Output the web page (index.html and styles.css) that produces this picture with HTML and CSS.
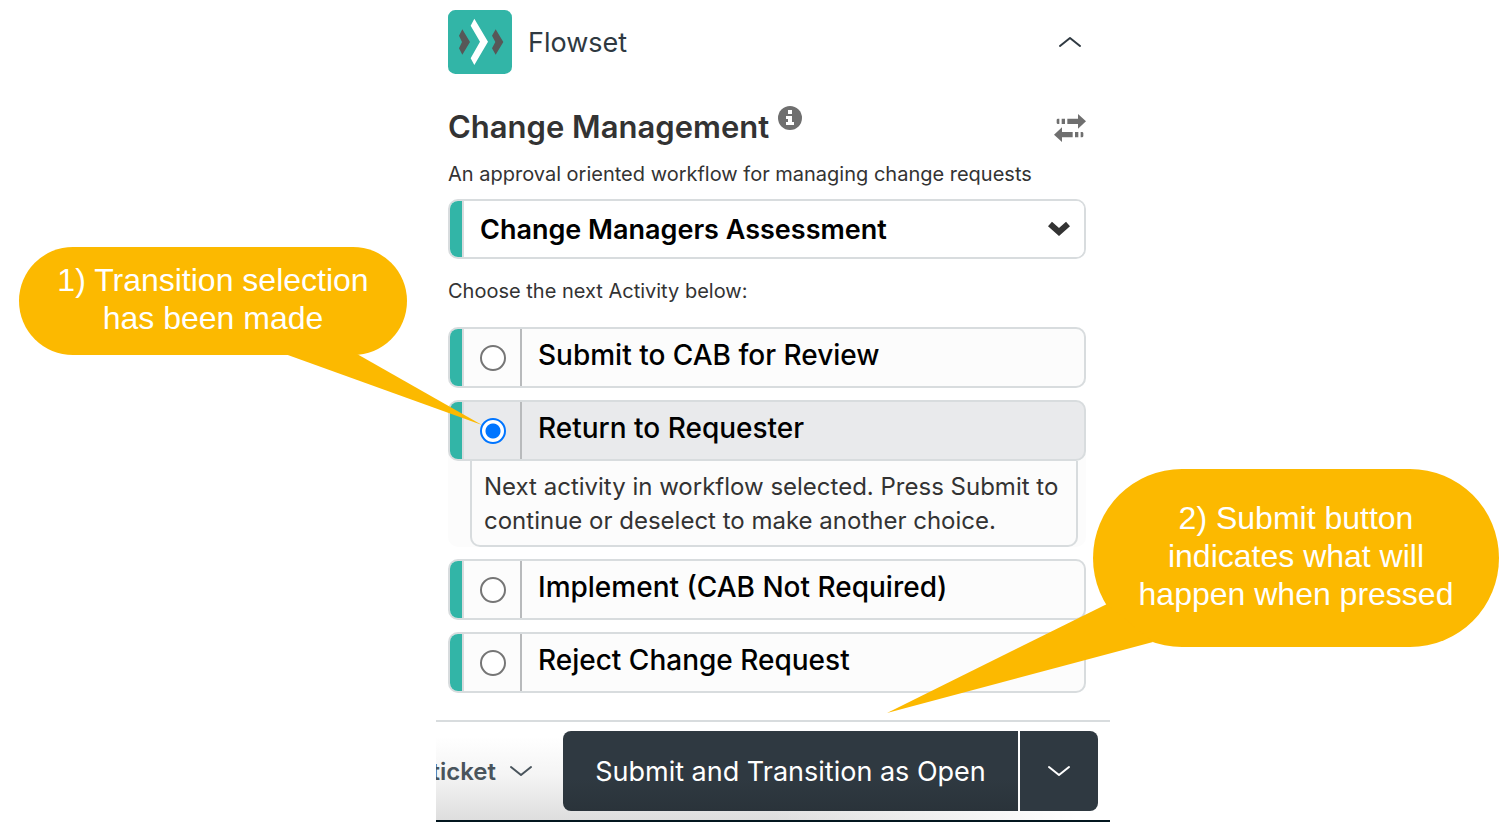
FILE: index.html
```html
<!DOCTYPE html>
<html lang="en">
<head>
  <meta charset="UTF-8">
  <meta name="viewport" content="width=device-width, initial-scale=1.0">
  <title>Flowset</title>
  <link rel="stylesheet" href="styles.css">
</head>
<body>
  <div class="page">
    <main class="panel">
      <header class="app-header">
        <svg class="logo" viewBox="0 0 192 192" aria-hidden="true">
          <rect width="192" height="192" rx="22" fill="#32b5a7"/>
          <path d="M43 58 66 96 43 134 33 115 42 96 33 77z" fill="#575757"/>
          <path d="M79 26 120 95 79 165 68 145 96 95 68 47z" fill="#fff"/>
          <path d="M143 58 166 96 143 134 132 115 142 96 132 77z" fill="#575757"/>
        </svg>
        <span class="app-name">Flowset</span>
        <button class="icon-button" type="button" aria-label="Collapse">
          <svg class="chevron" viewBox="0 0 22 12"><path d="M1 10 11 2 21 10"/></svg>
        </button>
      </header>

      <div class="title-row">
        <h1>Change Management</h1>
        <svg class="info" viewBox="0 0 24 24" aria-hidden="true">
          <circle cx="12" cy="12" r="12" fill="#6f6f6f"/>
          <path d="M10 4h4v4h-4zM8 10h6v6h2v3H8v-3h2v-3H8z" fill="#fff"/>
        </svg>
        <button class="icon-button" type="button" aria-label="Switch workflow">
          <svg class="swap" viewBox="0 0 96 84" fill="#6f6f6f">
            <path d="M12 14h4v16h-4q-4 0-4-4v-8q0-4 4-4zM23 14h10v16H23zM40 14h32V0l24 22-24 22V30H40z"/>
            <path d="M84 54h-4v16h4q4 0 4-4v-8q0-4-4-4zM73 54H63v16h10zM56 54H24V40L0 62l24 22V70h32z"/>
          </svg>
        </button>
      </div>
      <p class="small-text">An approval oriented workflow for managing change requests</p>

      <div class="select-box">
        <select class="activity-select" aria-label="Current activity">
          <option>Change Managers Assessment</option>
        </select>
        <svg class="select-arrow" viewBox="0 0 22 15" aria-hidden="true">
          <path d="M2 3 11 11 20 3" fill="none" stroke="#333" stroke-width="6"/>
        </svg>
      </div>

      <p class="small-text choose">Choose the next Activity below:</p>

      <form class="options">
        <div class="option">
          <label class="option-row">
            <span class="radio-cell"><input type="radio" name="activity"></span>
            <span class="option-label">Submit to CAB for Review</span>
          </label>
        </div>
        <div class="option selected">
          <label class="option-row">
            <span class="radio-cell"><input type="radio" name="activity" checked></span>
            <span class="option-label">Return to Requester</span>
          </label>
          <p class="option-hint">Next activity in workflow selected. Press Submit to continue or deselect to make another choice.</p>
        </div>
        <div class="option">
          <label class="option-row">
            <span class="radio-cell"><input type="radio" name="activity"></span>
            <span class="option-label">Implement (CAB Not Required)</span>
          </label>
        </div>
        <div class="option">
          <label class="option-row">
            <span class="radio-cell"><input type="radio" name="activity"></span>
            <span class="option-label">Reject Change Request</span>
          </label>
        </div>
      </form>

      <div class="callout callout-left">
        <svg class="tail" viewBox="0 0 388 180" aria-hidden="true"><path d="M266 107 338 107 463 178z"/></svg>
        <span class="callout-text">1) Transition selection has been made</span>
      </div>
      <div class="callout callout-right">
        <svg class="tail" viewBox="0 0 406 246" aria-hidden="true"><path d="M14 135 60 173-206 244z"/></svg>
        <span class="callout-text">2) Submit button indicates what will happen when pressed</span>
      </div>
    </main>

    <footer class="footer">
      <button class="ticket-button" type="button">
        ticket
        <svg class="chevron" viewBox="0 0 22 12"><path d="M1 2 11 10 21 2"/></svg>
      </button>
      <div class="submit-group">
        <button class="submit" type="button">Submit and Transition as Open</button>
        <button class="submit-more" type="button" aria-label="More submit options">
          <svg class="chevron" viewBox="0 0 22 12"><path d="M1 2 11 10 21 2"/></svg>
        </button>
      </div>
    </footer>
  </div>
</body>
</html>
```

FILE: styles.css
```css
* {
  box-sizing: border-box;
}
body {
  font-family: Inter, "Liberation Sans", sans-serif;
  background-color: #fff;
  color: #333;
  margin: 0;
}
button,
select {
  font-family: inherit;
  cursor: pointer;
}
h1,
p {
  margin: 0;
}
.page {
  display: grid;
  grid-template-columns: 436fr 674fr 400fr;
  grid-template-rows: 1fr auto;
  min-height: 100vh;
}
.panel {
  grid-column: 2;
  position: relative;
  padding: 10px 24px 27px 12px;
}

/* header */
.app-header {
  display: flex;
  align-items: center;
  gap: 16px;
}
.logo {
  width: 64px;
  height: 64px;
}
.app-name {
  font-size: 27px;
  color: #2f3941;
}
.icon-button {
  display: flex;
  justify-content: center;
  width: 32px;
  margin-left: auto;
  padding: 0;
  background: none;
  border: none;
  color: #2f3941;
}
.chevron {
  display: block;
  width: 22px;
  height: 12px;
  fill: none;
  stroke: currentColor;
  stroke-width: 2;
  stroke-linecap: round;
  stroke-linejoin: round;
}
.title-row {
  display: flex;
  align-items: center;
  gap: 9px;
  margin-top: 28px;
  height: 48px;
}
h1 {
  font-size: 31px;
  font-weight: 600;
}
.info {
  width: 24px;
  height: 24px;
  margin-bottom: 16px;
}
.swap {
  width: 32px;
  height: 28px;
  margin-top: 4px;
}
.small-text {
  margin-top: 8px;
  font-size: 20px;
  line-height: 32px;
}

/* current activity */
.select-box {
  position: relative;
  margin-top: 9px;
  height: 60px;
  border: 2px solid #d8dcde;
  border-radius: 10px;
  overflow: hidden;
}
.activity-select {
  appearance: none;
  width: 100%;
  height: 100%;
  padding: 0 56px 0 18px;
  background-color: #fff;
  border: none;
  border-left: 12px solid #32b5a7;
  box-shadow: inset 2px 0 #d8dcde;
  font-size: 27px;
  font-weight: 600;
  color: #000;
}
.select-arrow {
  position: absolute;
  right: 14px;
  top: 20px;
  width: 22px;
  height: 15px;
  pointer-events: none;
}
.choose {
  margin-top: 16px;
}

/* next activities */
.options {
  display: flex;
  flex-direction: column;
  gap: 12px;
  margin-top: 20px;
}
.option {
  background: #fcfcfc;
  border-radius: 10px;
}
.option-row {
  display: flex;
  height: 61px;
  border: 2px solid #d8dcde;
  border-radius: 10px;
  overflow: hidden;
}
.selected .option-row {
  background: #e9eaec;
}
.radio-cell {
  display: flex;
  align-items: center;
  width: 72px;
  padding-left: 18px;
  border-left: 12px solid #32b5a7;
  border-right: 2px solid #b8babc;
  box-shadow: inset 2px 0 #d8dcde;
}
.radio-cell input {
  appearance: none;
  width: 26px;
  height: 26px;
  margin: 0;
  background: #fff;
  border: 2px solid #767676;
  border-radius: 50%;
}
.radio-cell input:checked {
  border-color: #0075ff;
  background: radial-gradient(circle, #0075ff 7px, #fff 8px);
}
.option-label {
  padding-left: 16px;
  font-size: 28px;
  font-weight: 500;
  line-height: 52px;
  color: #000;
}
.option-hint {
  margin: 0 8px 0 22px;
  padding: 9px 12px 7px;
  border: 2px solid #d8dcde;
  border-top: none;
  border-radius: 0 0 10px 10px;
  font-size: 24px;
  line-height: 34px;
}

/* callouts */
.callout {
  position: absolute;
  display: flex;
  justify-content: center;
  background: #fcb900;
  color: #fff;
  font-family: "Liberation Sans", Arial, sans-serif;
  font-size: 32px;
  line-height: 38px;
  text-align: center;
}
.callout-left {
  top: 247px;
  right: calc(100% + 29px);
  width: 388px;
  height: 108px;
  padding: 14px 32px;
  border-radius: 54px;
}
.callout-right {
  top: 469px;
  left: calc(100% - 17px);
  width: 406px;
  height: 178px;
  padding: 30px 40px;
  border-radius: 89px;
}
.tail {
  position: absolute;
  top: 0;
  left: 0;
  width: 100%;
  overflow: visible;
  fill: #fcb900;
  pointer-events: none;
}
.callout-text {
  position: relative;
}

/* footer */
.footer {
  grid-column: 2;
  display: flex;
  justify-content: flex-end;
  align-items: center;
  gap: 31px;
  height: 102px;
  padding: 0 12px 0 0;
  overflow: hidden;
  border-top: 2px solid #d8dcde;
  border-bottom: 2px solid #03161f;
  background: linear-gradient(to right, transparent 50%, #fff 95%), linear-gradient(#fff 15%, #f4f4f4 55%, #dedede);
}
.ticket-button {
  display: flex;
  align-items: center;
  gap: 14px;
  padding: 0;
  background: none;
  border: none;
  font-size: 24px;
  font-weight: 600;
  color: #49545c;
}
.submit-group {
  display: flex;
  flex-shrink: 0;
  gap: 2px;
  height: 80px;
}
.submit,
.submit-more {
  border: none;
  background: linear-gradient(#2f3941 60%, #2a333a);
  color: #fff;
  font-size: 27px;
}
.submit {
  width: 455px;
  padding: 0;
  border-radius: 8px 0 0 8px;
}
.submit-more {
  display: flex;
  align-items: center;
  justify-content: center;
  width: 78px;
  background: #2f3941;
  border-radius: 0 8px 8px 0;
}
```
